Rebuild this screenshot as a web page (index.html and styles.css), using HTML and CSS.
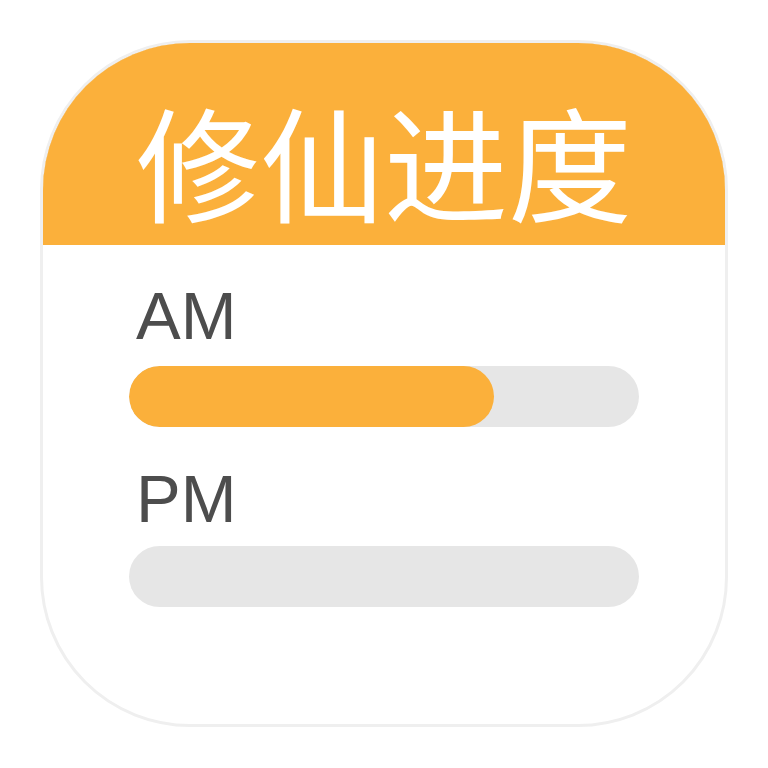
FILE: index.html
```html
<!DOCTYPE html>
<html>
<head>
<meta charset="utf-8">
<link rel="stylesheet" href="styles.css">
</head>
<body>
<div class="card">
  <div class="header"><span class="title">修仙进度</span></div>
  <div class="content">
    <div class="label am">AM</div>
    <div class="track track-am"><div class="fill" style="width:365px"></div></div>
    <div class="label pm">PM</div>
    <div class="track track-pm"></div>
  </div>
</div>
</body>
</html>
```
FILE: styles.css
```css
html, body { margin: 0; padding: 0; background: #ffffff; }
body { width: 768px; height: 768px; overflow: hidden; }
.card {
  margin: 40px 0 0 40px;
  width: 688px;
  height: 687px;
  box-sizing: border-box;
  border: 3px solid #efefef;
  border-radius: 150px;
  overflow: hidden;
  background: #ffffff;
}
.header {
  background: #fbb03b;
  height: 205px;
  margin: -3px -3px 0 -3px;
  box-sizing: border-box;
  border: 3px solid #eda83c;
  border-bottom: none;
  border-radius: 150px 150px 0 0;
  display: flex;
  justify-content: center;
  align-items: center;
}
.title {
  font-family: "Noto Sans CJK SC", sans-serif;
  color: #ffffff;
  font-size: 124px;
  line-height: 1;
  padding-top: 30px;
  letter-spacing: 0;
}
.content {
  padding: 0 86px;
  display: flex;
  flex-direction: column;
}
.label {
  font-family: "Liberation Sans", Arial, sans-serif;
  font-size: 67px;
  line-height: 1;
  color: #4d4d4d;
  padding-left: 7px;
  height: 50px;
}
.am { margin-top: 37px; }
.pm { margin-top: 38px; }
.track {
  height: 61px;
  width: 510px;
  border-radius: 31px;
  background: #e6e6e6;
  overflow: hidden;
}
.track-am { margin-top: 34px; }
.track-pm { margin-top: 31px; }
.fill {
  height: 100%;
  background: #fbb03b;
  border-radius: 31px;
}
```
